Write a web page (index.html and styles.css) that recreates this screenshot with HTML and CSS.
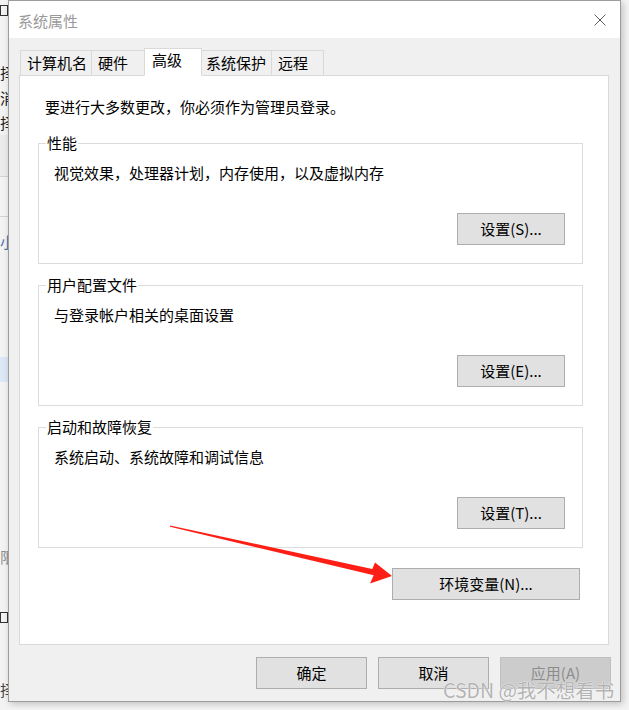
FILE: index.html
```html
<!DOCTYPE html>
<html lang="zh-CN">
<head>
<meta charset="utf-8">
<title>系统属性</title>
<link rel="stylesheet" href="styles.css">
</head>
<body>
<div class="desktop">
  <div class="bgapp">
    <div class="bg-row h20"><span class="chk"></span></div>
    <div class="bg-row h40"></div>
    <div class="bg-row h25">择</div>
    <div class="bg-row h25">消</div>
    <div class="bg-row h25">择</div>
    <div class="bg-row h42 shade"></div>
    <div class="bg-row h40 sep"></div>
    <div class="bg-row h17"></div>
    <div class="bg-row h15 blue">小</div>
    <div class="bg-row h108"></div>
    <div class="bg-row h25 hl"></div>
    <div class="bg-row h166"></div>
    <div class="bg-row h16 grey">限</div>
    <div class="bg-row h46"></div>
    <div class="bg-row h14"><span class="chk"></span></div>
    <div class="bg-row h57"></div>
    <div class="bg-row h16 grey2">择</div>
  </div>

  <div class="window">
    <div class="titlebar">
      <span class="title">系统属性</span>
      <svg class="close" width="12" height="12" viewBox="0 0 12 12"><path d="M0.5 0.5 L11.5 11.5 M11.5 0.5 L0.5 11.5" stroke="#5a5a5a" stroke-width="1" fill="none"/></svg>
    </div>
    <div class="winbody">
      <div class="tabs">
        <div class="tab t1">计算机名</div>
        <div class="tab t2">硬件</div>
        <div class="tab t3 active">高级</div>
        <div class="tab t4">系统保护</div>
        <div class="tab t5">远程</div>
      </div>
      <div class="panel">
        <p class="intro">要进行大多数更改，你必须作为管理员登录。</p>
        <div class="group">
          <div class="glabel">性能</div>
          <div class="gtext">视觉效果，处理器计划，内存使用，以及虚拟内存</div>
          <button class="btn gbtn">设置(S)...</button>
        </div>
        <div class="group">
          <div class="glabel">用户配置文件</div>
          <div class="gtext">与登录帐户相关的桌面设置</div>
          <button class="btn gbtn">设置(E)...</button>
        </div>
        <div class="group">
          <div class="glabel">启动和故障恢复</div>
          <div class="gtext">系统启动、系统故障和调试信息</div>
          <button class="btn gbtn">设置(T)...</button>
        </div>
        <button class="btn envbtn">环境变量(N)...</button>
      </div>
      <div class="footer">
        <button class="btn fbtn">确定</button>
        <button class="btn fbtn">取消</button>
        <button class="btn fbtn disabled">应用(A)</button>
      </div>
    </div>
  </div>

  <svg class="arrow" width="629" height="710" viewBox="0 0 629 710">
    <polygon points="170,525.4 372.3,569 375,562.5 392,576 370,583.5 373.7,575.2 170,526.8" fill="#fd1f15"/>
  </svg>

  <div class="watermark">CSDN @我不想看书</div>
</div>
</body>
</html>
```

FILE: styles.css
```css
* { box-sizing: border-box; }

body {
  margin: 0;
  font-family: "Noto Sans CJK SC", "Noto Sans", sans-serif;
  font-size: 15px;
  color: #000;
}

.desktop {
  position: relative;
  width: 629px;
  height: 710px;
  overflow: hidden;
  background: #f4f4f4;
}

/* background application strip */
.bgapp {
  width: 8px;
  height: 710px;
  overflow: hidden;
  display: flex;
  flex-direction: column;
  background: #f3f3f3;
}
.bg-row {
  flex: none;
  white-space: nowrap;
  font-size: 15px;
  line-height: 1;
  display: flex;
  align-items: center;
  color: #222;
}
.h14 { height: 14px; }
.h15 { height: 15px; }
.h16 { height: 16px; }
.h17 { height: 17px; }
.h20 { height: 20px; }
.h25 { height: 25px; }
.h40 { height: 40px; }
.h42 { height: 42px; }
.h46 { height: 46px; }
.h57 { height: 57px; }
.h108 { height: 108px; }
.h166 { height: 166px; }
.shade { background: #ebebeb; border-bottom: 1px solid #d2d2d2; }
.sep { border-bottom: 1px solid #d2d2d2; }
.blue { color: #4a6fa5; }
.grey { color: #8a8a8a; }
.grey2 { color: #444; }
.hl { background: #dce8f5; }
.chk {
  display: block;
  width: 12px;
  height: 11px;
  border: 1px solid #333;
  margin-left: 0;
}

/* dialog window */
.window {
  position: absolute;
  left: 8px;
  top: 0;
  width: 613px;
  height: 702px;
  border: 1px solid #9c9c9c;
  background: #f0f0f0;
  display: flex;
  flex-direction: column;
  box-shadow: 2px 2px 7px rgba(0, 0, 0, 0.22);
}

.titlebar {
  flex: none;
  height: 37px;
  background: #fff;
  display: flex;
  align-items: center;
  padding: 2px 14px 0 9px;
}
.title {
  color: #9a9a9a;
  line-height: 20px;
}
.close {
  margin-left: auto;
  margin-top: -2px;
  display: block;
}

.winbody {
  flex: 1;
  display: flex;
  flex-direction: column;
  padding: 10px 11px 12px 10px;
}

.tabs {
  flex: none;
  display: flex;
  align-items: flex-end;
  height: 28px;
  margin: 0 0 -1px 1px;
  position: relative;
  z-index: 1;
}
.tab {
  height: 26px;
  border: 1px solid #d9d9d9;
  margin-right: -1px;
  background: #f0f0f0;
  padding-left: 6px;
  line-height: 24px;
  white-space: nowrap;
}
.tab.active {
  height: 28px;
  background: #fff;
  border-bottom-color: #fff;
  line-height: 22px;
  padding-left: 7px;
  position: relative;
  z-index: 1;
}
.t1 { width: 72px; }
.t2 { width: 54px; }
.t3 { width: 58px; }
.t4 { width: 71px; padding-left: 4px; }
.t5 { width: 53px; }

.panel {
  flex: none;
  height: 570px;
  background: #fff;
  border: 1px solid #d9d9d9;
  display: flex;
  flex-direction: column;
  padding: 20px 0 0 18px;
}
.intro {
  margin: 0 0 0 7px;
  line-height: 21px;
}

.group {
  flex: none;
  width: 545px;
  height: 121px;
  border: 1px solid #dcdcdc;
  display: flex;
  flex-direction: column;
  margin-top: 21px;
}
.intro + .group { margin-top: 26px; }

.glabel {
  align-self: flex-start;
  margin: -11px 0 0 7px;
  padding: 0 1px;
  background: #fff;
  line-height: 20px;
}
.gtext {
  margin: 10px 0 0 15px;
  line-height: 20px;
}

.btn {
  border: 1px solid #adadad;
  background: #e1e1e1;
  font: inherit;
  color: #000;
  padding: 0;
  height: 32px;
  line-height: 30px;
  text-align: center;
}
.gbtn {
  align-self: flex-end;
  width: 108px;
  margin: 30px 17px 0 0;
}
.envbtn {
  align-self: flex-end;
  width: 188px;
  margin: 20px 28px 0 0;
}

.footer {
  flex: none;
  display: flex;
  justify-content: flex-end;
  gap: 11px;
  margin: 12px -2px 0 0;
}
.fbtn { width: 111px; }
.fbtn.disabled {
  background: #cccccc;
  border-color: #bfbfbf;
  color: #8c8c8c;
}

/* overlays */
.arrow {
  position: absolute;
  left: 0;
  top: 0;
  pointer-events: none;
}
.watermark {
  position: absolute;
  left: 443px;
  top: 678px;
  font-size: 19.5px;
  line-height: 24px;
  color: #b3b3b3;
  white-space: nowrap;
  text-shadow: 0 0 1px #fff, 0 0 1px #fff;
}
```
